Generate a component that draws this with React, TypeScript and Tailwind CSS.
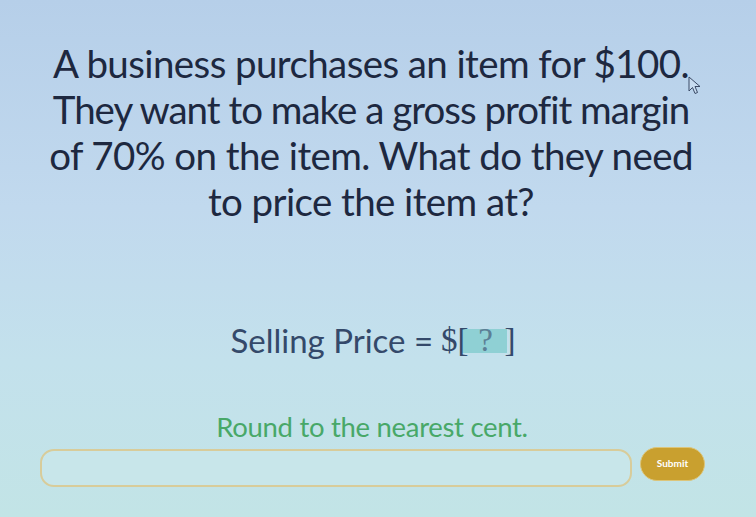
import React from "react";

export default function App() {
  return (
    <div className="relative w-[756px] h-[517px] overflow-hidden bg-[linear-gradient(180deg,#b6cfe9_0%,#c1d9ee_40%,#c3e1ec_70%,#c2e4e6_100%)] flex flex-col items-center" style={{ fontFamily: "Lato, 'Noto Sans', sans-serif" }}>
      <div className="mt-[40px] ml-[-14px] text-center text-[#1d2840] text-[38.5px] leading-[46px] tracking-[-0.6px]">
        <div>A business purchases an item for $100.</div>
        <div className="tracking-[-1px]">They want to make a gross profit margin</div>
        <div>of 70% on the item. What do they need</div>
        <div>to price the item at?</div>
      </div>
      <div className="mt-[92px] flex items-center text-[33px] text-[#34496a] ml-[-10px]">
        <span>Selling Price = </span>
        <span className="ml-[8px]" style={{ fontFamily: "'Liberation Serif', serif" }}>$</span>
        <span className="flex items-center" style={{ fontFamily: "'Liberation Serif', serif" }}>
          <span className="relative z-10">[</span>
          <span className="bg-[#8fd0d4] w-[46px] h-[24px] flex items-center justify-center text-[#5c7f96] ml-[-8px] mr-[-2px] pl-[4px]">?</span>
          <span className="relative z-10">]</span>
        </span>
      </div>
      <div className="mt-[40px] text-[27.5px] text-[#48a868] tracking-[-0.3px] ml-[-12px]">Round to the nearest cent.</div>
      <div className="mt-[2px] w-full flex items-center pl-[40px] gap-[8px]">
        <div className="w-[592px] h-[38px] rounded-[14px] border-[2px] border-[#d8cc9a] bg-[#c8e6ea]"></div>
        <div className="w-[65px] h-[34px] rounded-full bg-[#c9a02f] border border-[#dcc57a] flex items-center justify-center text-white text-[10px] font-bold mt-[-8px]">Submit</div>
      </div>
      <svg className="absolute left-[688px] top-[76px]" width="14" height="20" viewBox="0 0 14 20">
        <path d="M1 1 L1 15 L4.5 11.5 L7 17.5 L9.5 16.5 L7 10.5 L12 10.5 Z" fill="#c8dcf0" stroke="#3a4a66" strokeWidth="1" strokeLinejoin="round" />
      </svg>
    </div>
  );
}
